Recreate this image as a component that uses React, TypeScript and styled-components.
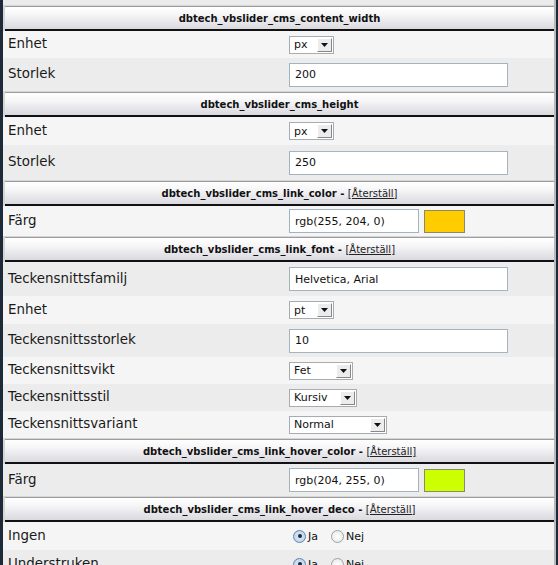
import React from "react";
import styled, { createGlobalStyle } from "styled-components";

const GlobalStyle = createGlobalStyle`
  html, body {
    margin: 0;
    padding: 0;
    background: #1d2a38;
    font-family: "DejaVu Sans", Verdana, sans-serif;
  }
`;

const Frame = styled.div`
  width: 553px;
  margin-left: 3px;
  background: #d6d6d6;
  border-right: 2px solid #b9b9b9;
  box-sizing: border-box;
  height: 565px;
  overflow: hidden;
`;

const TopSliver = styled.div`
  height: 5px;
  background: #ececec;
`;

const Header = styled.div`
  margin-top: 1px;
  height: 22px;
  border-top: 1px solid #9c9c9c;
  border-bottom: 2px solid #111;
  border-right: 2px solid #111;
  margin-left: 2px;
  margin-right: -2px;
  background: linear-gradient(to bottom, #ffffff 0%, #f6f6f8 35%, #d9d9df 100%);
  display: flex;
  align-items: center;
  justify-content: center;
  font-size: 10px;
  color: #111;
`;

const Title = styled.span`
  font-weight: bold;
`;

const Reset = styled.a`
  color: #222;
  text-decoration: underline;
  font-weight: normal;
  cursor: pointer;
`;

const Row = styled.div<{ $h: number; $alt: boolean }>`
  height: ${(p) => p.$h}px;
  background: ${(p) => (p.$alt ? "#ececec" : "#f5f5f5")};
  display: flex;
  align-items: center;
`;

const Label = styled.div`
  width: 286px;
  padding-left: 5px;
  box-sizing: border-box;
  font-size: 13.4px;
  color: #1a1a1a;
  margin-top: -2px;
`;

const Field = styled.div`
  display: flex;
  align-items: center;
  gap: 5px;
`;

const TextInput = styled.input<{ $w: number }>`
  width: ${(p) => p.$w}px;
  height: 24px;
  box-sizing: border-box;
  border: 1px solid #a3b3bf;
  background: #fff;
  padding: 0 5px;
  font-family: "DejaVu Sans", Verdana, sans-serif;
  font-size: 11px;
  color: #111;
  outline: none;
`;

const Swatch = styled.div<{ $c: string }>`
  width: 41px;
  height: 23px;
  box-sizing: border-box;
  background: ${(p) => p.$c};
  border: 1px solid #8a8a6a;
`;

const Select = styled.div<{ $w: number }>`
  width: ${(p) => p.$w}px;
  height: 18px;
  box-sizing: border-box;
  border: 1px solid #a5acb2;
  background: #fff;
  display: flex;
  align-items: center;
  justify-content: space-between;
  padding-left: 4px;
  font-size: 11px;
  color: #111;
`;

const Arrow = styled.div`
  width: 15px;
  height: 14px;
  margin-right: 1px;
  box-sizing: border-box;
  background: #ececec;
  border-top: 1px solid #fff;
  border-left: 1px solid #fff;
  border-right: 1px solid #888;
  border-bottom: 1px solid #888;
  display: flex;
  align-items: center;
  justify-content: center;
`;

const RadioGroup = styled.div`
  display: flex;
  align-items: center;
  margin-left: 4px;
  font-size: 11px;
  color: #111;
`;

const RadioOpt = styled.label`
  display: flex;
  align-items: center;
  margin-right: 13px;
`;

const RadioDot = styled.span<{ $on: boolean }>`
  width: 13px;
  height: 13px;
  box-sizing: border-box;
  border-radius: 50%;
  border: 1px solid ${(p) => (p.$on ? "#5b86b3" : "#9aa4ad")};
  background: ${(p) => (p.$on ? "radial-gradient(circle, #dfe9f5, #b9cde3)" : "radial-gradient(circle, #fff, #e4e4e4)")};
  display: flex;
  align-items: center;
  justify-content: center;
  margin-right: 2px;
  &::after {
    content: "";
    width: 4px;
    height: 4px;
    border-radius: 50%;
    background: ${(p) => (p.$on ? "#1c2e44" : "transparent")};
  }
`;

type Ctl =
  | { kind: "select"; value: string; w: number }
  | { kind: "input"; value: string }
  | { kind: "color"; value: string; c: string }
  | { kind: "radio" };

type R = { label: string; h: number; ctl: Ctl };
type Section = { title: string; reset?: boolean; rows: R[] };

const sections: Section[] = [
  {
    title: "dbtech_vbslider_cms_content_width",
    rows: [
      { label: "Enhet", h: 27, ctl: { kind: "select", value: "px", w: 45 } },
      { label: "Storlek", h: 33, ctl: { kind: "input", value: "200" } },
    ],
  },
  {
    title: "dbtech_vbslider_cms_height",
    rows: [
      { label: "Enhet", h: 28, ctl: { kind: "select", value: "px", w: 45 } },
      { label: "Storlek", h: 35, ctl: { kind: "input", value: "250" } },
    ],
  },
  {
    title: "dbtech_vbslider_cms_link_color",
    reset: true,
    rows: [{ label: "Färg", h: 30, ctl: { kind: "color", value: "rgb(255, 204, 0)", c: "#ffcc00" } }],
  },
  {
    title: "dbtech_vbslider_cms_link_font",
    reset: true,
    rows: [
      { label: "Teckensnittsfamilj", h: 34, ctl: { kind: "input", value: "Helvetica, Arial" } },
      { label: "Enhet", h: 28, ctl: { kind: "select", value: "pt", w: 45 } },
      { label: "Teckensnittsstorlek", h: 33, ctl: { kind: "input", value: "10" } },
      { label: "Teckensnittsvikt", h: 27, ctl: { kind: "select", value: "Fet", w: 64 } },
      { label: "Teckensnittsstil", h: 27, ctl: { kind: "select", value: "Kursiv", w: 68 } },
      { label: "Teckensnittsvariant", h: 27, ctl: { kind: "select", value: "Normal", w: 98 } },
    ],
  },
  {
    title: "dbtech_vbslider_cms_link_hover_color",
    reset: true,
    rows: [{ label: "Färg", h: 32, ctl: { kind: "color", value: "rgb(204, 255, 0)", c: "#ccff00" } }],
  },
  {
    title: "dbtech_vbslider_cms_link_hover_deco",
    reset: true,
    rows: [
      { label: "Ingen", h: 28, ctl: { kind: "radio" } },
      { label: "Understruken", h: 28, ctl: { kind: "radio" } },
    ],
  },
];

const DownArrow = () => (
  <svg width="7" height="4" viewBox="0 0 7 4">
    <path d="M0 0 H7 L3.5 4 Z" fill="#111" />
  </svg>
);

const Control = ({ ctl }: { ctl: Ctl }) => {
  if (ctl.kind === "select") {
    return (
      <Select $w={ctl.w}>
        <span>{ctl.value}</span>
        <Arrow>
          <DownArrow />
        </Arrow>
      </Select>
    );
  }
  if (ctl.kind === "input") {
    return <TextInput $w={219} defaultValue={ctl.value} />;
  }
  if (ctl.kind === "color") {
    return (
      <Field>
        <TextInput $w={130} defaultValue={ctl.value} />
        <Swatch $c={ctl.c} />
      </Field>
    );
  }
  return (
    <RadioGroup>
      <RadioOpt>
        <RadioDot $on={true} />
        Ja
      </RadioOpt>
      <RadioOpt>
        <RadioDot $on={false} />
        Nej
      </RadioOpt>
    </RadioGroup>
  );
};

export default function App() {
  let n = 0;
  return (
    <>
      <GlobalStyle />
      <Frame>
        <TopSliver />
        {sections.map((s) => (
          <React.Fragment key={s.title}>
            <Header>
              <Title>{s.title}</Title>
              {s.reset && (
                <>
                  <Title>&nbsp;-&nbsp;</Title>
                  <Reset>[Återställ]</Reset>
                </>
              )}
            </Header>
            {s.rows.map((r, i) => {
              n += 1;
              return (
                <Row key={i} $h={r.h} $alt={n % 2 === 0}>
                  <Label>{r.label}</Label>
                  <Field>
                    <Control ctl={r.ctl} />
                  </Field>
                </Row>
              );
            })}
          </React.Fragment>
        ))}
      </Frame>
    </>
  );
}
